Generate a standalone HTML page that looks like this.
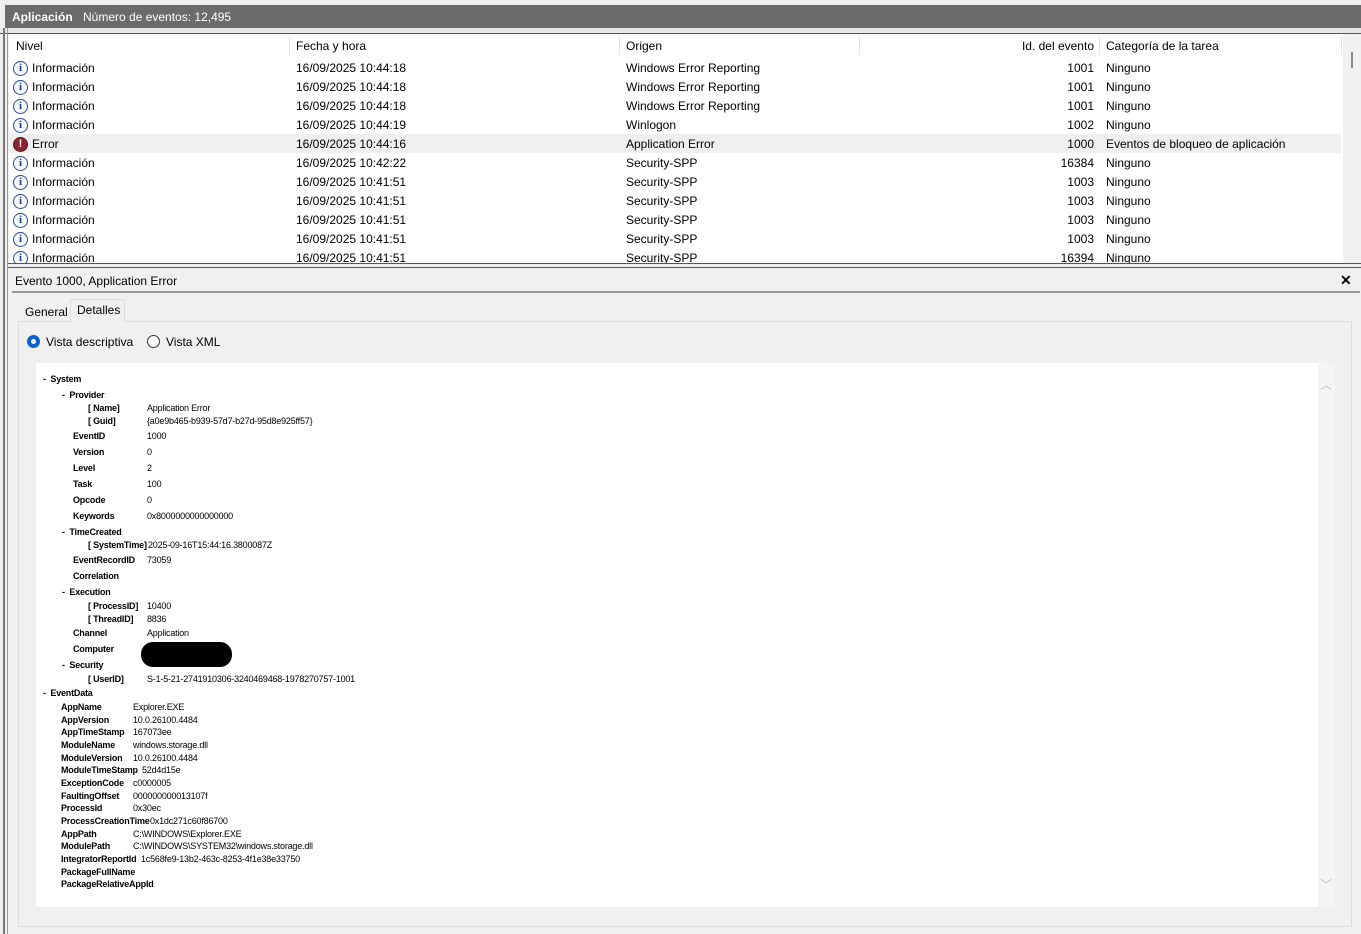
<!DOCTYPE html>
<html><head><meta charset="utf-8"><style>
*{margin:0;padding:0;box-sizing:border-box}
body{width:1361px;height:934px;background:#f0f0f0;font-family:"Liberation Sans",sans-serif;font-size:12px;color:#000;position:relative;overflow:hidden}
.a{position:absolute;white-space:nowrap}
.top{position:absolute;left:5px;top:5px;width:1356px;height:23px;background:#6b6b6b;color:#fff;font-size:12px}
.list{position:absolute;left:9px;top:34px;width:1334px;height:229px;background:#fff;overflow:hidden}
.sb{position:absolute;left:1343px;top:34px;width:18px;height:229px;background:#f0f0f0}
.row{position:absolute;left:0;width:1332px;height:19px;line-height:21px}
.row span{position:absolute}
.ic{width:15px;height:15px;border-radius:50%;border:1.5px solid #2a4e8c;background:#f4f7fc;top:3px;left:4px;font:bold 11px "Liberation Serif",serif;color:#1b3f85;text-align:center;line-height:12px}
.er{background:#8c2232;border-color:#6a1525;color:#fff;font-family:"Liberation Sans";line-height:12px}
.t{position:absolute;font-size:9px;white-space:nowrap;line-height:13px;letter-spacing:-0.2px}
.b{font-weight:bold}
</style></head><body>
<div class="a" style="left:0;top:28px;width:1361px;height:6px;background:#e8e8e8;border-bottom:1px solid #555"></div>
<div class="a" style="left:3px;top:28px;width:2px;height:906px;background:#777"></div>
<div class="a" style="left:7px;top:28px;width:1px;height:906px;background:#999"></div>
<div class="top"><span class="a b" style="left:7px;top:5px">Aplicación</span><span class="a" style="left:78px;top:5px">Número de eventos: 12,495</span></div>
<div class="list">
<div class="row" style="top:2px"><span style="left:7px">Nivel</span><span style="left:287px">Fecha y hora</span><span style="left:617px">Origen</span><span style="right:247px">Id. del evento</span><span style="left:1097px">Categoría de la tarea</span></div>
<div class="a" style="left:280px;top:2px;width:1px;height:19px;background:#e5e5e5"></div>
<div class="a" style="left:610px;top:2px;width:1px;height:19px;background:#e5e5e5"></div>
<div class="a" style="left:850px;top:2px;width:1px;height:19px;background:#e5e5e5"></div>
<div class="a" style="left:1090px;top:2px;width:1px;height:19px;background:#e5e5e5"></div>
<div class="a" style="left:1332px;top:2px;width:1px;height:19px;background:#e5e5e5"></div>
<div class="row" style="top:24px"><span class="ic">i</span><span style="left:23px">Información</span><span style="left:287px">16/09/2025 10:44:18</span><span style="left:617px">Windows Error Reporting</span><span style="right:247px">1001</span><span style="left:1097px">Ninguno</span></div>
<div class="row" style="top:43px"><span class="ic">i</span><span style="left:23px">Información</span><span style="left:287px">16/09/2025 10:44:18</span><span style="left:617px">Windows Error Reporting</span><span style="right:247px">1001</span><span style="left:1097px">Ninguno</span></div>
<div class="row" style="top:62px"><span class="ic">i</span><span style="left:23px">Información</span><span style="left:287px">16/09/2025 10:44:18</span><span style="left:617px">Windows Error Reporting</span><span style="right:247px">1001</span><span style="left:1097px">Ninguno</span></div>
<div class="row" style="top:81px"><span class="ic">i</span><span style="left:23px">Información</span><span style="left:287px">16/09/2025 10:44:19</span><span style="left:617px">Winlogon</span><span style="right:247px">1002</span><span style="left:1097px">Ninguno</span></div>
<div class="row" style="top:100px;background:#efefef"><span class="ic er">!</span><span style="left:23px">Error</span><span style="left:287px">16/09/2025 10:44:16</span><span style="left:617px">Application Error</span><span style="right:247px">1000</span><span style="left:1097px">Eventos de bloqueo de aplicación</span></div>
<div class="row" style="top:119px"><span class="ic">i</span><span style="left:23px">Información</span><span style="left:287px">16/09/2025 10:42:22</span><span style="left:617px">Security-SPP</span><span style="right:247px">16384</span><span style="left:1097px">Ninguno</span></div>
<div class="row" style="top:138px"><span class="ic">i</span><span style="left:23px">Información</span><span style="left:287px">16/09/2025 10:41:51</span><span style="left:617px">Security-SPP</span><span style="right:247px">1003</span><span style="left:1097px">Ninguno</span></div>
<div class="row" style="top:157px"><span class="ic">i</span><span style="left:23px">Información</span><span style="left:287px">16/09/2025 10:41:51</span><span style="left:617px">Security-SPP</span><span style="right:247px">1003</span><span style="left:1097px">Ninguno</span></div>
<div class="row" style="top:176px"><span class="ic">i</span><span style="left:23px">Información</span><span style="left:287px">16/09/2025 10:41:51</span><span style="left:617px">Security-SPP</span><span style="right:247px">1003</span><span style="left:1097px">Ninguno</span></div>
<div class="row" style="top:195px"><span class="ic">i</span><span style="left:23px">Información</span><span style="left:287px">16/09/2025 10:41:51</span><span style="left:617px">Security-SPP</span><span style="right:247px">1003</span><span style="left:1097px">Ninguno</span></div>
<div class="row" style="top:214px"><span class="ic">i</span><span style="left:23px">Información</span><span style="left:287px">16/09/2025 10:41:51</span><span style="left:617px">Security-SPP</span><span style="right:247px">16394</span><span style="left:1097px">Ninguno</span></div>
</div>
<div class="sb"><div class="a" style="left:8px;top:18px;width:2px;height:16px;background:#888"></div></div>
<div class="a" style="left:8px;top:263px;width:1353px;height:1px;background:#555"></div>
<div class="a" style="left:8px;top:267px;width:1353px;height:1px;background:#555"></div>
<div class="a" style="left:15px;top:274px">Evento 1000, Application Error</div>
<div class="a b" style="left:1340px;top:272px;font-size:14px">✕</div>
<div class="a" style="left:12px;top:291px;width:1348px;height:2px;background:#999"></div>
<div class="a" style="left:18px;top:321px;width:1334px;height:606px;border:1px solid #dcdcdc;background:#f0f0f0"></div>
<div class="a" style="left:25px;top:305px">General</div>
<div class="a" style="left:70px;top:299px;width:55px;height:23px;background:#f0f0f0;border:1px solid #dcdcdc;border-bottom:none"></div>
<div class="a" style="left:77px;top:303px">Detalles</div>
<div class="a" style="left:27px;top:335px;width:13px;height:13px;border-radius:50%;background:#0a64c8"><div class="a" style="left:4px;top:4px;width:5px;height:5px;border-radius:50%;background:#fff"></div></div>
<div class="a" style="left:46px;top:335px">Vista descriptiva</div>
<div class="a" style="left:147px;top:335px;width:13px;height:13px;border-radius:50%;border:1px solid #333;background:#fff"></div>
<div class="a" style="left:166px;top:335px">Vista XML</div>
<div class="a" style="left:36px;top:363px;width:1299px;height:544px;background:#fff"></div>
<div class="a" style="left:1318px;top:363px;width:17px;height:544px;background:#f5f5f5"></div>
<div class="a" style="left:1320px;top:376px;color:#bbb;font-size:12px">︿</div>
<div class="a" style="left:1320px;top:876px;color:#bbb;font-size:12px">﹀</div>

<div class="t b" style="left:43px;top:373px">-&nbsp;&nbsp;System</div>
<div class="t b" style="left:62px;top:389px">-&nbsp;&nbsp;Provider</div>
<div class="t b" style="left:88px;top:402px">[ Name]</div><div class="t" style="left:147px;top:402px">Application Error</div>
<div class="t b" style="left:88px;top:415px">[ Guid]</div><div class="t" style="left:147px;top:415px">{a0e9b465-b939-57d7-b27d-95d8e925ff57}</div>
<div class="t b" style="left:73px;top:430px">EventID</div><div class="t" style="left:147px;top:430px">1000</div>
<div class="t b" style="left:73px;top:446px">Version</div><div class="t" style="left:147px;top:446px">0</div>
<div class="t b" style="left:73px;top:462px">Level</div><div class="t" style="left:147px;top:462px">2</div>
<div class="t b" style="left:73px;top:478px">Task</div><div class="t" style="left:147px;top:478px">100</div>
<div class="t b" style="left:73px;top:494px">Opcode</div><div class="t" style="left:147px;top:494px">0</div>
<div class="t b" style="left:73px;top:510px">Keywords</div><div class="t" style="left:147px;top:510px">0x8000000000000000</div>
<div class="t b" style="left:62px;top:526px">-&nbsp;&nbsp;TimeCreated</div>
<div class="t b" style="left:88px;top:539px">[ SystemTime]</div><div class="t" style="left:148px;top:539px">2025-09-16T15:44:16.3800087Z</div>
<div class="t b" style="left:73px;top:554px">EventRecordID</div><div class="t" style="left:147px;top:554px">73059</div>
<div class="t b" style="left:73px;top:570px">Correlation</div>
<div class="t b" style="left:62px;top:586px">-&nbsp;&nbsp;Execution</div>
<div class="t b" style="left:88px;top:600px">[ ProcessID]</div><div class="t" style="left:147px;top:600px">10400</div>
<div class="t b" style="left:88px;top:613px">[ ThreadID]</div><div class="t" style="left:147px;top:613px">8836</div>
<div class="t b" style="left:73px;top:627px">Channel</div><div class="t" style="left:147px;top:627px">Application</div>
<div class="t b" style="left:73px;top:643px">Computer</div>
<div class="a" style="left:141px;top:642px;width:91px;height:25px;border-radius:12px;background:#000"></div>
<div class="t b" style="left:62px;top:659px">-&nbsp;&nbsp;Security</div>
<div class="t b" style="left:88px;top:673px">[ UserID]</div><div class="t" style="left:147px;top:673px">S-1-5-21-2741910306-3240469468-1978270757-1001</div>
<div class="t b" style="left:43px;top:687px">-&nbsp;&nbsp;EventData</div>
<div class="t b" style="left:61px;top:701px">AppName</div><div class="t" style="left:133px;top:701px">Explorer.EXE</div>
<div class="t b" style="left:61px;top:714px">AppVersion</div><div class="t" style="left:133px;top:714px">10.0.26100.4484</div>
<div class="t b" style="left:61px;top:726px">AppTimeStamp</div><div class="t" style="left:133px;top:726px">167073ee</div>
<div class="t b" style="left:61px;top:739px">ModuleName</div><div class="t" style="left:133px;top:739px">windows.storage.dll</div>
<div class="t b" style="left:61px;top:752px">ModuleVersion</div><div class="t" style="left:133px;top:752px">10.0.26100.4484</div>
<div class="t b" style="left:61px;top:764px">ModuleTimeStamp</div><div class="t" style="left:142px;top:764px">52d4d15e</div>
<div class="t b" style="left:61px;top:777px">ExceptionCode</div><div class="t" style="left:133px;top:777px">c0000005</div>
<div class="t b" style="left:61px;top:790px">FaultingOffset</div><div class="t" style="left:133px;top:790px">000000000013107f</div>
<div class="t b" style="left:61px;top:802px">ProcessId</div><div class="t" style="left:133px;top:802px">0x30ec</div>
<div class="t b" style="left:61px;top:815px">ProcessCreationTime</div><div class="t" style="left:150px;top:815px">0x1dc271c60f86700</div>
<div class="t b" style="left:61px;top:828px">AppPath</div><div class="t" style="left:133px;top:828px">C:\WINDOWS\Explorer.EXE</div>
<div class="t b" style="left:61px;top:840px">ModulePath</div><div class="t" style="left:133px;top:840px">C:\WINDOWS\SYSTEM32\windows.storage.dll</div>
<div class="t b" style="left:61px;top:853px">IntegratorReportId</div><div class="t" style="left:141px;top:853px">1c568fe9-13b2-463c-8253-4f1e38e33750</div>
<div class="t b" style="left:61px;top:866px">PackageFullName</div>
<div class="t b" style="left:61px;top:878px">PackageRelativeAppId</div>
</body></html>
